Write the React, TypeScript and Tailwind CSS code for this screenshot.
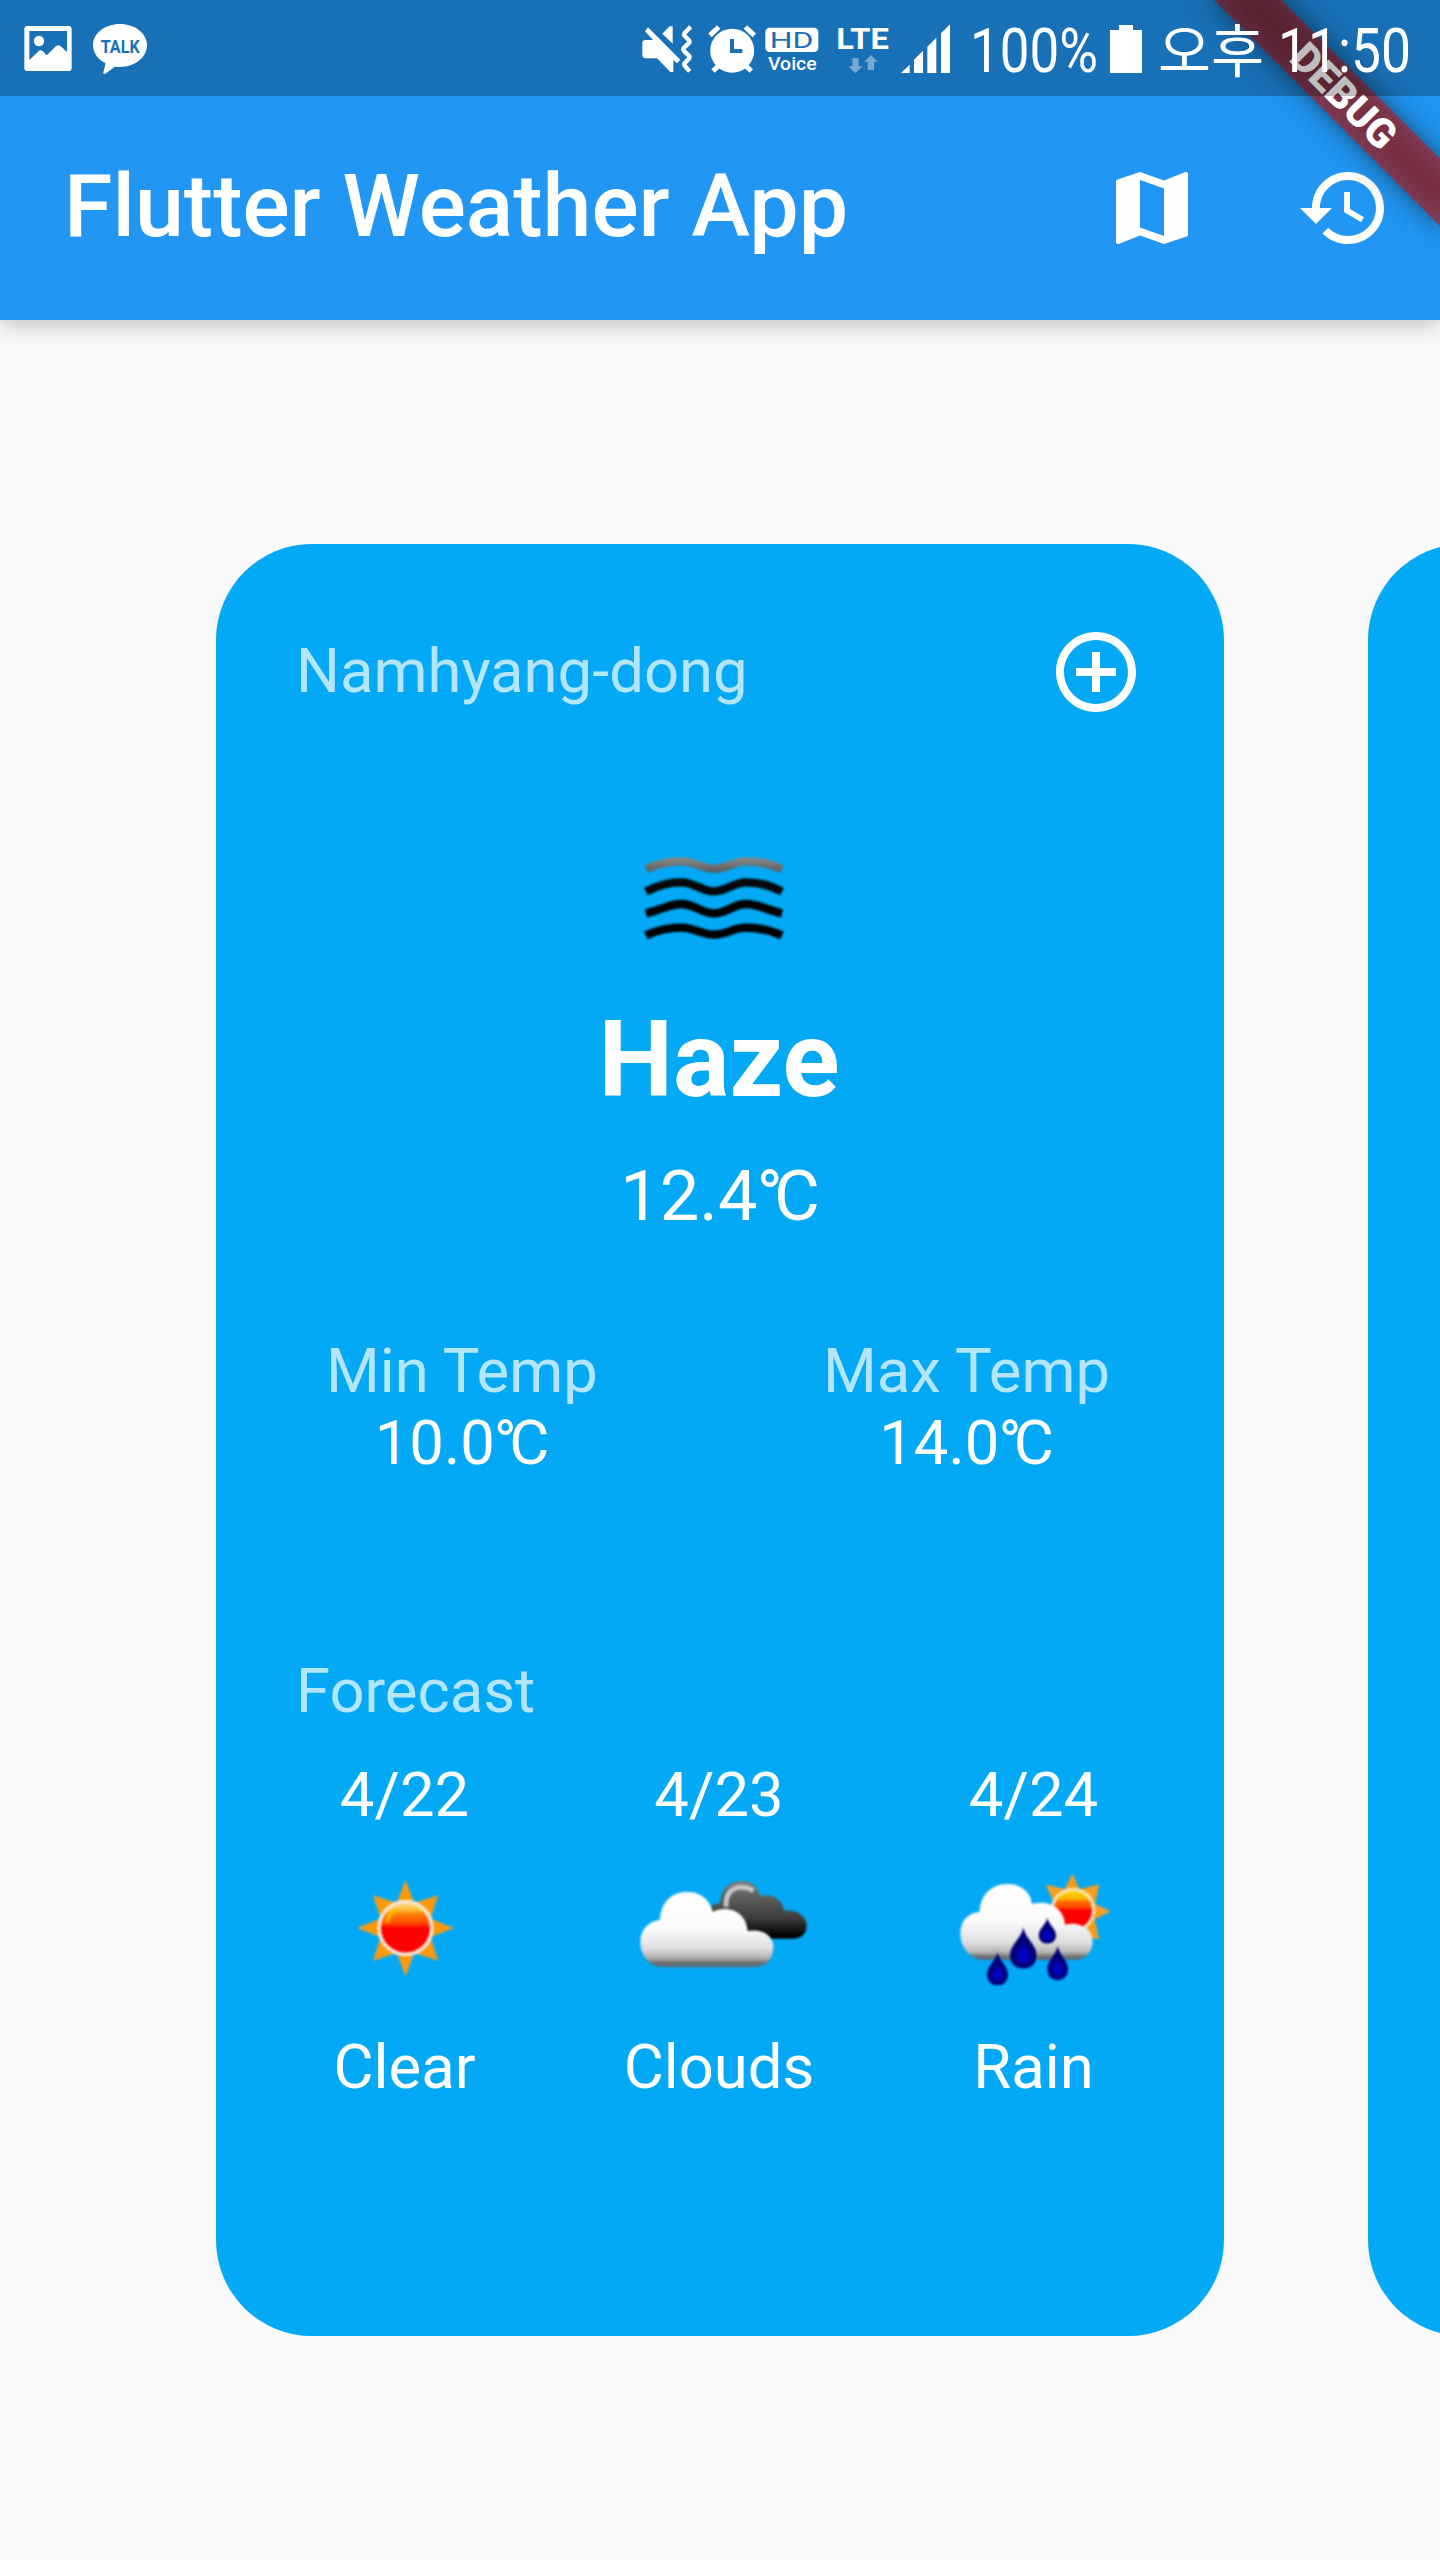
import React from "react";

const FONT = "font-['Roboto','Noto_Sans_CJK_KR',sans-serif]";

function StatusBar() {
  return (
    <div className="relative z-20 flex h-24 items-start bg-black/25 text-white">
      <svg className="ml-6 mt-[26px] h-[45px] w-12 shrink-0" viewBox="72 78 144 135" fill="none">
        <path
          fill="white"
          fillRule="evenodd"
          d="M83 78H205Q215 78 215 88V203Q215 213 205 213H83Q73 213 73 203V88Q73 78 83 78ZM88 93V180L114 155Q122 147 130 155L140 166L166 140Q175 131 184 140L201 156V93Z"
        />
        <circle cx="117" cy="123" r="15.500" fill="white" />
      </svg>
      <svg className="ml-[21px] mt-6 h-[50px] w-[54px] shrink-0" viewBox="279 72 162 150">
        <path
          fill="white"
          d="M360 72C405 72 441 100 441 136C441 172 405 201 360 201Q352 201 345 200L316 221Q309 224 310 217L317 190C294 179 279 159 279 136C279 100 315 72 360 72Z"
        />
        <text x="302" y="158" textLength="117" lengthAdjust="spacingAndGlyphs" fontSize="53" fontWeight="700" fill="#1a70b6">
          TALK
        </text>
      </svg>

      <svg className="ml-[495px] mt-6 h-[50px] w-[51px] shrink-0" viewBox="65 72 153 150" fill="none">
        <path
          fill="white"
          d="M76 120H98L74 94L83 82L180 179L170 190L159 180V216H150L110 175H76Q66 175 66 165V130Q66 120 76 120ZM126 101L148 79H157V131Z"
        />
        <path stroke="white" strokeWidth="13" d="M214 79L196 98Q192 103 197 108L208 119Q213 124 208 129L195 141Q189 147 195 153L208 165Q213 170 208 176L197 187Q192 192 197 197L211 213" transform="translate(-3 1)" />
      </svg>
      <svg className="ml-[15px] mt-6 h-[50px] w-12 shrink-0" viewBox="265 72 144 150" fill="none">
        <circle cx="337.500" cy="152" r="66" fill="white" />
        <path stroke="white" strokeWidth="15" d="M271 106L297 81M377 81L404 106" />
        <path stroke="white" strokeWidth="15" d="M299 195L280 213M376 195L395 213" />
        <path stroke="#1a70b6" strokeWidth="12" d="M337 117V153H368" />
      </svg>
      <svg className="ml-[9px] mt-6 h-[50px] w-[54px] shrink-0" viewBox="437 72 162 150">
        <rect x="438" y="83" width="159" height="73" rx="13" fill="white" />
        <text x="451" y="144" textLength="131" lengthAdjust="spacingAndGlyphs" fontSize="67" fontWeight="400" fill="#1a70b6">
          HD
        </text>
        <text x="446" y="209" textLength="146" lengthAdjust="spacingAndGlyphs" fontSize="57" fontWeight="500" fill="white">
          Voice
        </text>
      </svg>
      <svg className="ml-[17px] mt-6 h-[50px] w-[53px] shrink-0" viewBox="649 72 159 150">
        <text x="650" y="147" textLength="158" lengthAdjust="spacingAndGlyphs" fontSize="91" fontWeight="700" fill="white">
          LTE
        </text>
        <path fill="#78a9d3" d="M698 175H717V199H729L707 220L686 199H698ZM754 165L774 186H763V210H744V186H733Z" />
      </svg>
      <svg className="ml-[12px] mt-6 h-[50px] w-[50px] shrink-0" viewBox="843 72 150 150">
        <path fill="white" d="M843 219L869 194V219ZM882 179L909 152V219H882ZM922 140L949 113V219H922ZM963 100L990 73V219H963Z" />
      </svg>
      <svg className="ml-[19px] mt-5 h-[60px] w-[129px] shrink-0" viewBox="0 0 129 60">
        <text x="0" y="52" textLength="128" lengthAdjust="spacingAndGlyphs" fontSize="61" fill="white">
          100%
        </text>
      </svg>
      <svg className="ml-[11px] mt-[25px] h-12 w-8 shrink-0" viewBox="0 0 32 48">
        <path fill="white" d="M9 0H23V5H32V48H0V5H9Z" />
      </svg>
      <svg className="ml-[16px] mt-5 h-[60px] w-[106px] shrink-0" viewBox="0 0 106 60">
        <text x="0" y="52" textLength="106" lengthAdjust="spacingAndGlyphs" fontSize="57" fontWeight="400" fill="white">
          오후
        </text>
      </svg>
      <svg className="ml-[14px] mt-5 h-[60px] w-[134px] shrink-0" viewBox="0 0 134 60">
        <text x="0" y="52" textLength="133" lengthAdjust="spacingAndGlyphs" fontSize="61" fill="white">
          11:50
        </text>
      </svg>
    </div>
  );
}

function AppBar() {
  return (
    <header className="flex h-[224px] items-center pl-16 pr-12 text-white">
      <h1 className="-mt-1 grow whitespace-nowrap text-[88px] font-medium leading-[104px]">Flutter Weather App</h1>
      <svg className="size-24" viewBox="0 0 24 24" fill="currentColor">
        <path d="M20.5 3l-.16.03L15 5.100 9 3 3.360 4.900c-.21.07-.36.250-.36.480V20.500c0 .280.220.500.500.500l.16-.03L9 18.900l6 2.100 5.640-1.900c.21-.07.36-.250.36-.480V3.500c0-.280-.220-.500-.500-.500zM15 19l-6-2.110V5l6 2.110V19z" />
      </svg>
      <svg className="ml-24 size-24" viewBox="0 0 24 24" fill="currentColor">
        <path d="M13 3c-4.970 0-9 4.030-9 9H1l3.890 3.890.07.14L9 12H6c0-3.870 3.130-7 7-7s7 3.130 7 7-3.130 7-7 7c-1.930 0-3.680-.79-4.940-2.060l-1.420 1.420C8.270 19.990 10.510 21 13 21c4.970 0 9-4.030 9-9s-4.030-9-9-9zm-1 5v5l4.280 2.540.72-1.210-3.500-2.080V8H12z" />
      </svg>
    </header>
  );
}

function DebugBanner() {
  return (
    <div className="absolute left-[1280px] top-[112px] z-10 h-12 w-80 origin-[160px_-112px] rotate-45">
      <div className="absolute inset-0 bg-black/50 blur-[14px]" />
      <div className="absolute inset-0 flex items-center justify-center bg-[#b71c1c]/63 text-[40.800px] font-black leading-none text-white">
        DEBUG
      </div>
    </div>
  );
}

function HazeIcon() {
  return (
    <svg className="size-[200px] blur-[1px]" viewBox="180 -66 600 600" fill="none">
      <defs>
        <linearGradient id="haze" x1="0" y1="110" x2="0" y2="160" gradientUnits="userSpaceOnUse">
          <stop offset="0" stopColor="#8f8f8f" />
          <stop offset="1" stopColor="#575757" />
        </linearGradient>
      </defs>
      <path d="M258 147Q310 124 362 124C405 124 425 146 462 146C500 146 520 124 558 124Q615 124 666 147" stroke="url(#haze)" strokeWidth="25" />
      <path d="M258 215Q310 187 362 187C405 187 425 214 462 214C500 214 520 187 558 187Q615 187 666 215" stroke="#060809" strokeWidth="25" />
      <path d="M258 280C310 268 330 252 362 252C405 252 425 280 462 280C500 280 520 252 558 252C595 252 615 268 666 280" stroke="#000" strokeWidth="25" />
      <path d="M258 346Q310 323 362 323C405 323 425 344 462 344C500 344 520 323 558 323Q615 323 666 346" stroke="#000" strokeWidth="25" />
    </svg>
  );
}

function SunIcon() {
  return (
    <svg className="size-[200px] blur-[0.800px]" viewBox="-46.5 -57 600 600">
      <defs>
        <linearGradient id="sun" x1="0" y1="0" x2="0" y2="1">
          <stop offset="0" stopColor="#ffe08a" />
          <stop offset="0.150" stopColor="#ffc040" />
          <stop offset="0.250" stopColor="#ff7a00" />
          <stop offset="0.420" stopColor="#ff4800" />
          <stop offset="0.500" stopColor="#ff0000" />
          <stop offset="1" stopColor="#ff0000" />
        </linearGradient>
      </defs>
      <path
        fill="#ff9808"
        stroke="#b5a45c"
        strokeWidth="3"
        d="M255 92L281 160L352 137L329 206L398 234L329 261L352 331L281 308L255 377L229 308L159 331L181 261L112 234L181 206L159 137L229 160Z"
      />
      <circle cx="255" cy="234" r="79" fill="url(#sun)" stroke="#f6e6d2" strokeWidth="11" />
      <path d="M200 218Q203 187 232 181" stroke="#ffb400" strokeWidth="11" fill="none" />
    </svg>
  );
}

function CloudsIcon() {
  return (
    <svg className="size-[200px] blur-[0.800px]" viewBox="-3 -57 600 600">
      <defs>
        <linearGradient id="dark" x1="0" y1="92" x2="0" y2="266" gradientUnits="userSpaceOnUse">
          <stop offset="0" stopColor="#808080" />
          <stop offset="0.300" stopColor="#5c5c5c" />
          <stop offset="0.650" stopColor="#3c3c3c" />
          <stop offset="0.900" stopColor="#0a0a0a" />
          <stop offset="1" stopColor="#000" />
        </linearGradient>
        <linearGradient id="white" x1="0" y1="125" x2="0" y2="352" gradientUnits="userSpaceOnUse">
          <stop offset="0" stopColor="#fff" />
          <stop offset="0.500" stopColor="#fbfbfb" />
          <stop offset="0.750" stopColor="#dedede" />
          <stop offset="0.880" stopColor="#b0b0b0" />
          <stop offset="0.940" stopColor="#6c6c6c" />
          <stop offset="1" stopColor="#557488" />
        </linearGradient>
      </defs>
      <path
        fill="url(#dark)"
        d="M275 186V165L300 160C302 122 325 93 365 93C394 93 412 107 421 139C452 128 484 145 494 182C530 178 560 198 560 225C560 250 546 265 520 266H430L330 250Z"
      />
      <path d="M319 170C315 133 334 112 365 112Q386 112 400 123" stroke="#c4c4c4" strokeWidth="15" fill="none" />
      <path
        fill="url(#white)"
        d="M120 210C122 158 153 126 202 126C240 126 270 148 278 186C330 162 379 190 383 243C425 235 460 255 460 290C460 328 438 351 400 352H125C87 350 61 315 61 276C61 240 84 214 120 210Z"
      />
    </svg>
  );
}

function Drop({ x, y, w, h }: { x: number; y: number; w: number; h: number }) {
  return (
    <svg x={x} y={y} width={w} height={h} viewBox="0 0 80 124" preserveAspectRatio="none">
      <path fill="#00007a" d="M40 0C46 34 80 52 80 84C80 110 62 124 40 124C18 124 0 110 0 84C0 52 34 34 40 0Z" />
      <path fill="#0000c4" d="M40 48C44 62 60 70 60 86C60 99 52 107 40 107C28 107 20 99 20 86C20 70 36 62 40 48Z" />
    </svg>
  );
}

function RainIcon() {
  return (
    <svg className="size-[200px] blur-[0.800px]" viewBox="10 -57 600 600">
      <defs>
        <linearGradient id="rainsun" x1="0" y1="118" x2="0" y2="240" gradientUnits="userSpaceOnUse">
          <stop offset="0" stopColor="#ffe000" />
          <stop offset="0.250" stopColor="#ffae00" />
          <stop offset="0.300" stopColor="#ff6a00" />
          <stop offset="0.460" stopColor="#ff4600" />
          <stop offset="0.500" stopColor="#ff0000" />
          <stop offset="1" stopColor="#ff0000" />
        </linearGradient>
        <linearGradient id="rain" x1="0" y1="100" x2="0" y2="330" gradientUnits="userSpaceOnUse">
          <stop offset="0" stopColor="#fff" />
          <stop offset="0.500" stopColor="#fbfbfb" />
          <stop offset="0.780" stopColor="#dcdcdc" />
          <stop offset="0.900" stopColor="#b4b4b4" />
          <stop offset="0.960" stopColor="#6c6c6c" />
          <stop offset="1" stopColor="#55707f" />
        </linearGradient>
      </defs>
      <path
        fill="#f79d1c"
        stroke="#b5a45c"
        strokeWidth="3"
        d="M425 72L446 118L505 104L492 162L538 184L492 208L504 268L445 250L405 250L350 200L372 160L346 104L403 118Z"
      />
      <circle cx="427" cy="180" r="62" fill="url(#rainsun)" stroke="#fbe3b8" strokeWidth="10" />
      <path
        fill="url(#rain)"
        d="M147 186C148 138 180 102 230 102C274 102 300 128 304 162C350 148 400 172 403 224C445 214 486 236 486 272C486 308 465 329 430 330H155C116 326 89 292 89 250C89 214 111 188 147 186Z"
      />
      <Drop x={238} y={232} w={80} h={124} />
      <Drop x={324} y={203} w={52} h={78} />
      <Drop x={169} y={305} w={63} h={101} />
      <Drop x={350} y={287} w={62} h={103} />
    </svg>
  );
}

const forecast = [
  { date: "4/22", label: "Clear", icon: <SunIcon /> },
  { date: "4/23", label: "Clouds", icon: <CloudsIcon /> },
  { date: "4/24", label: "Rain", icon: <RainIcon /> },
];

function Celsius({ value }: { value: string }) {
  return (
    <>
      {value}
      <span className="-ml-[0.015em] tracking-[-0.125em]">°</span>C
    </>
  );
}

function WeatherCard() {
  return (
    <section className="h-[1792px] w-[1008px] shrink-0 rounded-[96px] bg-[#03a9f4] p-20 text-[61.600px] leading-[72px] text-white">
      <div className="flex h-24 items-center justify-between">
        <span className="-mt-0.5 text-white/70">Namhyang-dong</span>
        <svg className="size-24" viewBox="0 0 24 24" fill="currentColor">
          <path d="M13 7h-2v4H7v2h4v4h2v-4h4v-2h-4V7zm-1-5C6.480 2 2 6.480 2 12s4.480 10 10 10 10-4.480 10-10S17.520 2 12 2zm0 18c-4.410 0-8-3.590-8-8s3.590-8 8-8 8 3.590 8 8-3.590 8-8 8z" />
        </svg>
      </div>
      <div className="mt-[78px] flex flex-col items-center">
        <HazeIcon />
        <h2 className="-ml-0.5 text-[105.600px] font-bold leading-[124px]">Haze</h2>
        <p className="mt-[33px] text-[70.400px] leading-[83px]">
          <Celsius value="12.4" />
        </p>
      </div>
      <div className="mt-[97px] flex justify-between pl-[30px] pr-[34px] text-center">
        <div>
          <p className="text-white/70">Min Temp</p>
          <p>
            <Celsius value="10.0" />
          </p>
        </div>
        <div>
          <p className="text-white/70">Max Temp</p>
          <p>
            <Celsius value="14.0" />
          </p>
        </div>
      </div>
      <p className="mt-[176px] text-white/70">Forecast</p>
      <div className="ml-[8.500px] mt-8 flex gap-[114.500px]">
        {forecast.map((day) => (
          <div key={day.date} className="flex w-[200px] shrink-0 flex-col items-center">
            <p>{day.date}</p>
            {day.icon}
            <p>{day.label}</p>
          </div>
        ))}
      </div>
    </section>
  );
}

export default function App() {
  return (
    <div className={`relative h-[2560px] w-[1440px] overflow-hidden bg-[#fafafa] ${FONT}`}>
      <div className="bg-[#2196f3] shadow-[0_6px_20px_rgba(0,0,0,0.220)]">
        <StatusBar />
        <AppBar />
      </div>
      <DebugBanner />
      <main className="flex gap-36 pl-[216px] pt-56">
        <WeatherCard />
        <section className="h-[1792px] w-[1008px] shrink-0 rounded-[96px] bg-[#03a9f4]" />
      </main>
    </div>
  );
}
